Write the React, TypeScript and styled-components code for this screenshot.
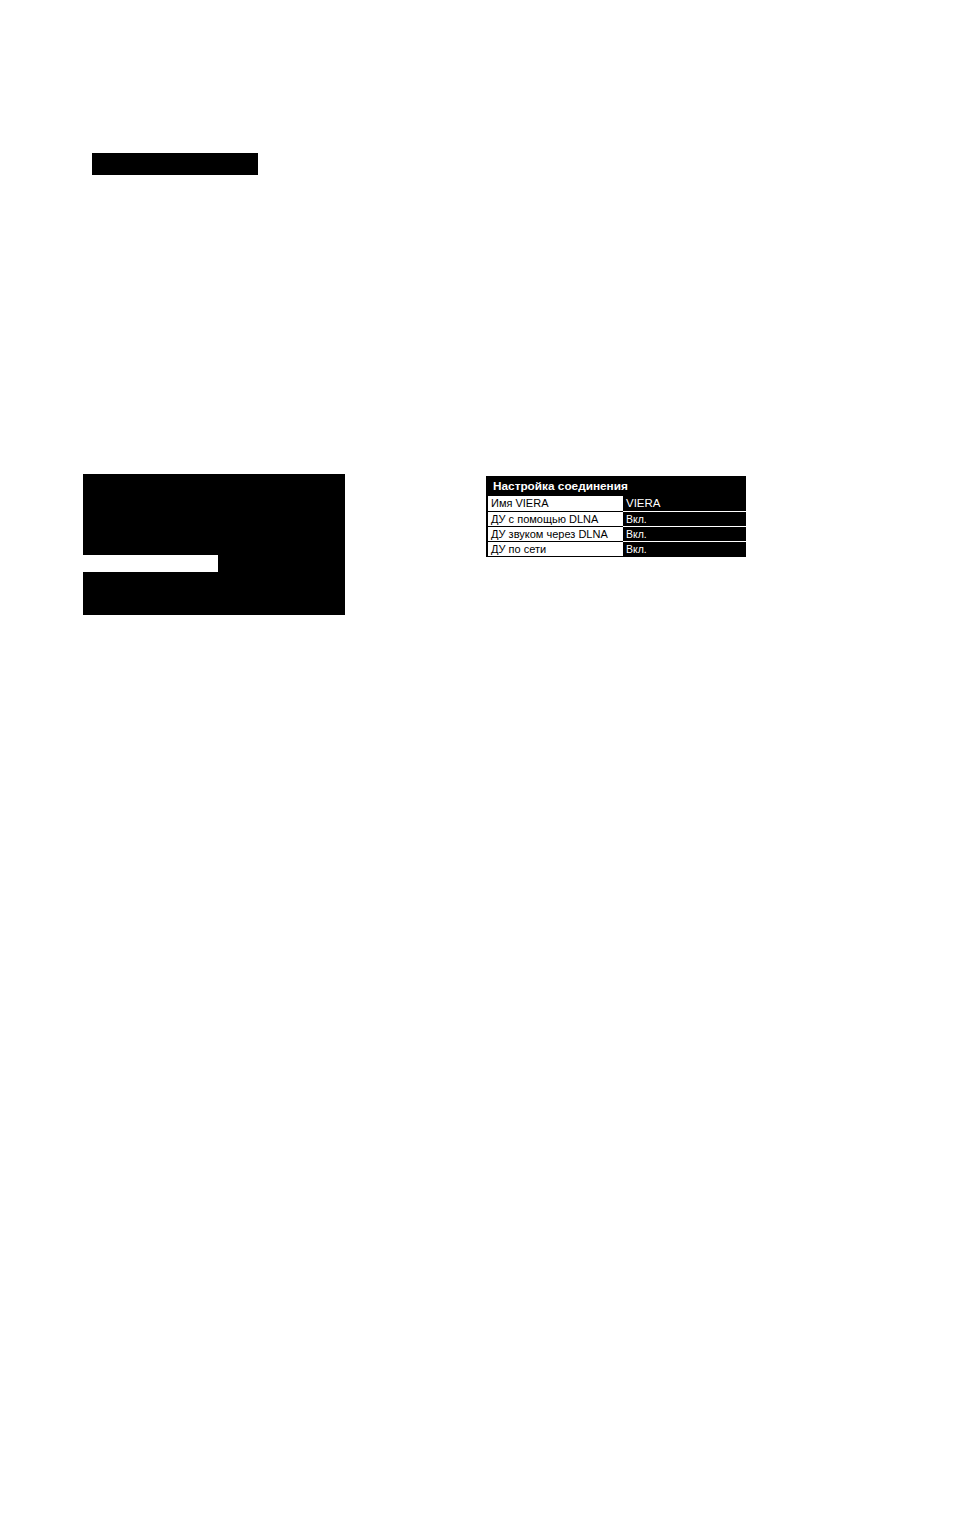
import React from "react";
import styled, { createGlobalStyle } from "styled-components";

const Global = createGlobalStyle`
  html, body {
    margin: 0;
    padding: 0;
    background: #fff;
    font-family: "Liberation Sans", Arial, sans-serif;
  }
`;

const Page = styled.div`
  width: 955px;
  height: 1519px;
  background: #fff;
  padding-top: 153px;
  box-sizing: border-box;
`;

const TitleBar = styled.div`
  margin-left: 92px;
  width: 166px;
  height: 22px;
  background: #000;
`;

const Row = styled.div`
  display: flex;
  align-items: flex-start;
  margin-top: 299px;
  padding-left: 83px;
`;

const Screen = styled.div`
  width: 262px;
  height: 141px;
  background: #000;
  padding-top: 81px;
  box-sizing: border-box;
`;

const Highlight = styled.div`
  width: 135px;
  height: 17px;
  background: #fff;
`;

const Panel = styled.div`
  margin-left: 141px;
  margin-top: 2px;
  width: 260px;
  background: #000;
  padding: 0 0 1px 2px;
  box-sizing: border-box;
`;

const PanelTitle = styled.div`
  height: 20px;
  padding-left: 5px;
  display: flex;
  align-items: center;
  color: #fff;
  font-size: 11.8px;
  font-weight: bold;
`;

const Item = styled.div`
  display: grid;
  grid-template-columns: 135px 1fr;
  height: 15px;
  font-size: 11px;
  line-height: 15px;
`;

const Label = styled.div<{ $first?: boolean }>`
  background: #fff;
  color: #000;
  padding-left: 3px;
  box-sizing: border-box;
  white-space: nowrap;
  border-top: ${(p) => (p.$first ? "none" : "1px solid #000")};
  line-height: ${(p) => (p.$first ? "15px" : "14px")};
`;

const Value = styled.div<{ $first?: boolean }>`
  background: #000;
  color: #fff;
  padding-left: 3px;
  box-sizing: border-box;
  border-top: ${(p) => (p.$first ? "none" : "1px solid #fff")};
  line-height: ${(p) => (p.$first ? "15px" : "14px")};
  font-size: ${(p) => (p.$first ? "11.5px" : "10.5px")};
`;

const rows = [
  ["Имя VIERA", "VIERA"],
  ["ДУ с помощью DLNA", "Вкл."],
  ["ДУ звуком через DLNA", "Вкл."],
  ["ДУ по сети", "Вкл."],
];

export default function App() {
  return (
    <Page>
      <Global />
      <TitleBar />
      <Row>
        <Screen>
          <Highlight />
        </Screen>
        <Panel>
          <PanelTitle>Настройка соединения</PanelTitle>
          {rows.map(([l, v], i) => (
            <Item key={l}>
              <Label $first={i === 0}>{l}</Label>
              <Value $first={i === 0}>{v}</Value>
            </Item>
          ))}
        </Panel>
      </Row>
    </Page>
  );
}
